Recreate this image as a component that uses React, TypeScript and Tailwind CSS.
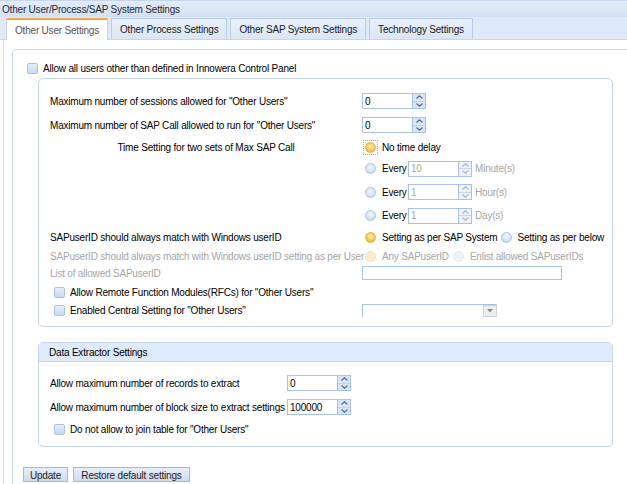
import clsx from "clsx";

function Check({ className = "" }: { className?: string }) {
  return (
    <span
      className={clsx(
        "inline-block h-[11px] w-[11px] shrink-0 rounded-[2px] border border-[#a9c1e3] bg-gradient-to-b from-[#e6eefa] to-[#c8d9f1]",
        className
      )}
    />
  );
}

function Radio({ on, faded, focus }: { on?: boolean; faded?: boolean; focus?: boolean }) {
  const look = on
    ? faded
      ? "border-[#f1e2b8] bg-[#f8ecc8]"
      : "border-[#e2b24c] bg-[radial-gradient(circle_at_50%_40%,#fff1b8_0%,#f7c850_55%,#e9ab36_100%)]"
    : faded
      ? "border-[#dfe8f5] bg-[#eef3fb]"
      : "border-[#a9c4e8] bg-[radial-gradient(circle_at_50%_35%,#f1f6fd_0%,#d3e3f7_60%,#b7cfee_100%)]";
  return (
    <span className="flex w-[20px] shrink-0 items-center">
      <span
        className={clsx(
          "ml-[2px] flex h-[13px] w-[13px] items-center justify-center",
          focus && "outline outline-1 outline-dotted outline-[#e0a040]"
        )}
      >
        <span className={clsx("block h-[11px] w-[11px] rounded-full border", look)} />
      </span>
    </span>
  );
}

function Chevron({ up, dim }: { up?: boolean; dim?: boolean }) {
  return (
    <svg width="7" height="4" viewBox="0 0 7 4" className="block">
      <polyline
        points={up ? "0.5,3.5 3.5,0.8 6.5,3.5" : "0.5,0.5 3.5,3.2 6.5,0.5"}
        fill="none"
        stroke={dim ? "#a8b6c8" : "#4d6a94"}
        strokeWidth="1.1"
      />
    </svg>
  );
}

function Spinner({ value, disabled }: { value: string; disabled?: boolean }) {
  return (
    <div className="flex h-[16px]">
      <div
        className={clsx(
          "flex w-[50px] items-center border border-r-0 border-[#a9c1e3] bg-white pl-[2px]",
          disabled ? "text-[#a8a8a8]" : "text-black"
        )}
      >
        {value}
      </div>
      <div
        className={clsx(
          "flex w-[14px] flex-col border border-[#a9c1e3]",
          disabled ? "bg-[#eef2f8]" : "bg-[#d8e5f6]"
        )}
      >
        <div className="flex flex-1 items-center justify-center border-b border-[#c3d4ec]">
          <Chevron up dim={disabled} />
        </div>
        <div className="flex flex-1 items-center justify-center">
          <Chevron dim={disabled} />
        </div>
      </div>
    </div>
  );
}

function Row({
  h,
  label,
  center,
  gray,
  children,
}: {
  h: string;
  label: React.ReactNode;
  center?: boolean;
  gray?: boolean;
  children?: React.ReactNode;
}) {
  return (
    <div className={clsx("flex items-center", h)}>
      <div
        className={clsx(
          "w-[312px] shrink-0 whitespace-nowrap",
          center && "text-center",
          gray ? "text-[#a6a6a6]" : "text-black"
        )}
      >
        {label}
      </div>
      {children}
    </div>
  );
}

function Every({ value, unit }: { value: string; unit: string }) {
  return (
    <div className="flex items-center">
      <Radio />
      <span className="w-[26px]">Every</span>
      <Spinner value={value} disabled />
      <span className="ml-[3px] text-[#a6a6a6]">{unit}</span>
    </div>
  );
}

const tabs = ["Other User Settings", "Other Process Settings", "Other SAP System Settings", "Technology Settings"];

export default function App() {
  return (
    <div className="h-[484px] w-[627px] overflow-hidden bg-white font-['Liberation_Sans',Arial,sans-serif] text-[10px] tracking-[-0.2px] text-black">
      {/* title */}
      <div className="flex h-[17px] items-center border-t border-[#c5d6ee] bg-gradient-to-b from-[#e4ecf8] to-[#d3e1f4] pl-[2px] text-[#1c2a40]">
        Other User/Process/SAP System Settings
      </div>

      {/* tab strip */}
      <div className="flex h-[23px] items-end gap-[3px] border-b border-[#c5d6ee] bg-[#dfe9f7] pl-[6px]">
        {tabs.map((t, i) => (
          <div
            key={t}
            className={clsx(
              "flex h-[21px] items-center border border-b-0 px-[8px]",
              i === 0
                ? "-mb-px h-[22px] border-[#c5d6ee] border-t-2 border-t-[#f4a64a] bg-white text-[#555]"
                : "border-[#b9cdea] bg-gradient-to-b from-[#e8f0fb] to-[#dbe6f6] text-[#1a1a1a]"
            )}
          >
            {t}
          </div>
        ))}
      </div>

      {/* body */}
      <div className="ml-[3px] h-[444px] border-l border-[#d3e0f2] pl-[8px] pt-[9px]">
        <div className="h-[440px] w-[640px] rounded-[4px] border border-[#c9d9ef]">
          {/* allow all users */}
          <div className="ml-[14px] mt-[11px] flex h-[14px] items-center gap-[5px]">
            <Check />
            <span>Allow all users other than defined in Innowera Control Panel</span>
          </div>

          {/* other users fieldset */}
          <div className="ml-[25px] mt-[3px] h-[249px] w-[575px] rounded-[5px] border border-[#c5d6ee] pl-[11px] pt-[10px]">
            <Row h="h-[24px]" label={'Maximum number of sessions allowed for "Other Users"'}>
              <Spinner value="0" />
            </Row>
            <Row h="h-[24px]" label={'Maximum number of SAP Call allowed to run for "Other Users"'}>
              <Spinner value="0" />
            </Row>
            <Row h="h-[20px]" label="Time Setting for two sets of Max SAP Call" center>
              <div className="flex items-center">
                <Radio on focus />
                <span>No time delay</span>
              </div>
            </Row>
            <Row h="h-[23px]" label="">
              <Every value="10" unit="Minute(s)" />
            </Row>
            <Row h="h-[24px]" label="">
              <Every value="1" unit="Hour(s)" />
            </Row>
            <Row h="h-[23px]" label="">
              <Every value="1" unit="Day(s)" />
            </Row>
            <Row h="h-[21px]" label="SAPuserID should always match with Windows userID">
              <div className="flex items-center">
                <Radio on />
                <span>Setting as per SAP System</span>
                <span className="ml-[1px]">
                  <Radio />
                </span>
                <span className="-ml-[1px]">Setting as per below</span>
              </div>
            </Row>
            <Row h="h-[16px]" label="SAPuserID should always match with Windows userID setting as per User" gray>
              <div className="flex items-center text-[#a6a6a6]">
                <Radio on faded />
                <span>Any SAPuserID</span>
                <span className="ml-[1px]">
                  <Radio faded />
                </span>
                <span>Enlist allowed SAPuserIDs</span>
              </div>
            </Row>
            <Row h="h-[18px]" label="List of allowed SAPuserID" gray>
              <div className="h-[14px] w-[200px] border border-[#a9c1e3] bg-white" />
            </Row>
            <div className="flex h-[20px] items-center gap-[5px] pl-[4px]">
              <Check />
              <span>Allow Remote Function Modules(RFCs) for "Other Users"</span>
            </div>
            <Row
              h="h-[17px]"
              label={
                <div className="flex items-center gap-[5px] pl-[4px]">
                  <Check />
                  <span>Enabled Central Setting for "Other Users"</span>
                </div>
              }
            >
              <div className="flex h-[13px] w-[135px] border-l border-t border-[#a9c1e3] bg-white">
                <div className="flex-1" />
                <div className="flex w-[14px] items-center justify-center border border-[#d0d0d0] bg-[#eeeeee]">
                  <svg width="6" height="4" viewBox="0 0 6 4">
                    <polygon points="0,0 6,0 3,3.5" fill="#8a8a8a" />
                  </svg>
                </div>
              </div>
            </Row>
          </div>

          {/* data extractor */}
          <div className="ml-[25px] mt-[15px] h-[105px] w-[575px] rounded-[5px] border border-[#c5d6ee]">
            <div className="flex h-[19px] items-center rounded-t-[4px] border-b border-[#c5d6ee] bg-[#dfeafa] pl-[10px]">
              Data Extractor Settings
            </div>
            <div className="pl-[11px] pt-[9px]">
              <div className="flex h-[24px] items-center">
                <div className="w-[237px] shrink-0 whitespace-nowrap">Allow maximum number of records to extract</div>
                <Spinner value="0" />
              </div>
              <div className="flex h-[24px] items-center">
                <div className="w-[237px] shrink-0 whitespace-nowrap">Allow maximum number of block size to extract settings</div>
                <Spinner value="100000" />
              </div>
              <div className="flex h-[20px] items-center gap-[5px] pl-[4px]">
                <Check />
                <span>Do not allow to join table for "Other Users"</span>
              </div>
            </div>
          </div>

          {/* buttons */}
          <div className="ml-[10px] mt-[20px] flex gap-[5px]">
            <button className="h-[15px] w-[45px] border border-[#9dbbe2] bg-gradient-to-b from-[#e6eefa] to-[#cddcf2] text-[10px] text-[#222]">
              Update
            </button>
            <button className="h-[15px] w-[117px] border border-[#9dbbe2] bg-gradient-to-b from-[#e6eefa] to-[#cddcf2] text-[10px] text-[#222]">
              Restore default settings
            </button>
          </div>
        </div>
      </div>
    </div>
  );
}
